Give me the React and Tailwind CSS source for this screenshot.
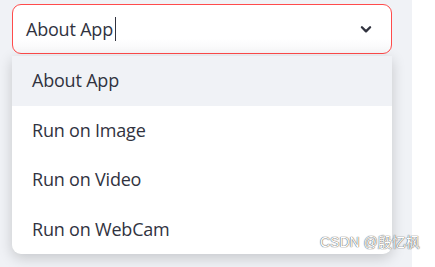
export default function App() {
  const options = ['About App', 'Run on Image', 'Run on Video', 'Run on WebCam'];

  return (
    <div className="flex h-[267px] w-[435px] overflow-hidden bg-white" style={{ fontFamily: '"Open Sans", "Noto Sans", sans-serif' }}>
      <div className="relative w-[412px] bg-[#f0f2f6] pl-3 pr-[20px] pt-1">
        <div className="flex h-[50px] items-center rounded-[9px] border border-[#ff4b4b] bg-gradient-to-b from-white from-70% to-[#f7f7f9] pl-[13px] pr-[18px]">
          <span className="text-[18px] tracking-[-0.2px] text-[#31333f]">About App</span>
          <span className="ml-[2px] h-[24px] w-px bg-[#31333f]" />
          <svg className="ml-auto" width="14" height="14" viewBox="0 0 24 24" fill="none" stroke="#31333f" strokeWidth="4" strokeLinecap="round" strokeLinejoin="round">
            <path d="M5 9l7 7 7-7" />
          </svg>
        </div>
        <div className="mt-[2px] overflow-hidden rounded-b-[9px] bg-white shadow-[0_4px_14px_rgba(0,0,0,0.18)]">
          {options.map((o, i) => (
            <div key={o} className={`flex h-[49.5px] items-center pl-[20px] text-[18px] tracking-[-0.2px] text-[#31333f] ${i === 0 ? 'bg-[#f0f2f6]' : ''}`}>
              {o}
            </div>
          ))}
        </div>
        <div className="absolute left-[320px] top-[232px] whitespace-nowrap text-[14px] text-white [text-shadow:0_0_1px_#555,0_0_1px_#555]" style={{ fontFamily: '"Liberation Sans", "Noto Sans CJK SC", sans-serif' }}>
          CSDN @殷忆枫
        </div>
      </div>
    </div>
  );
}
